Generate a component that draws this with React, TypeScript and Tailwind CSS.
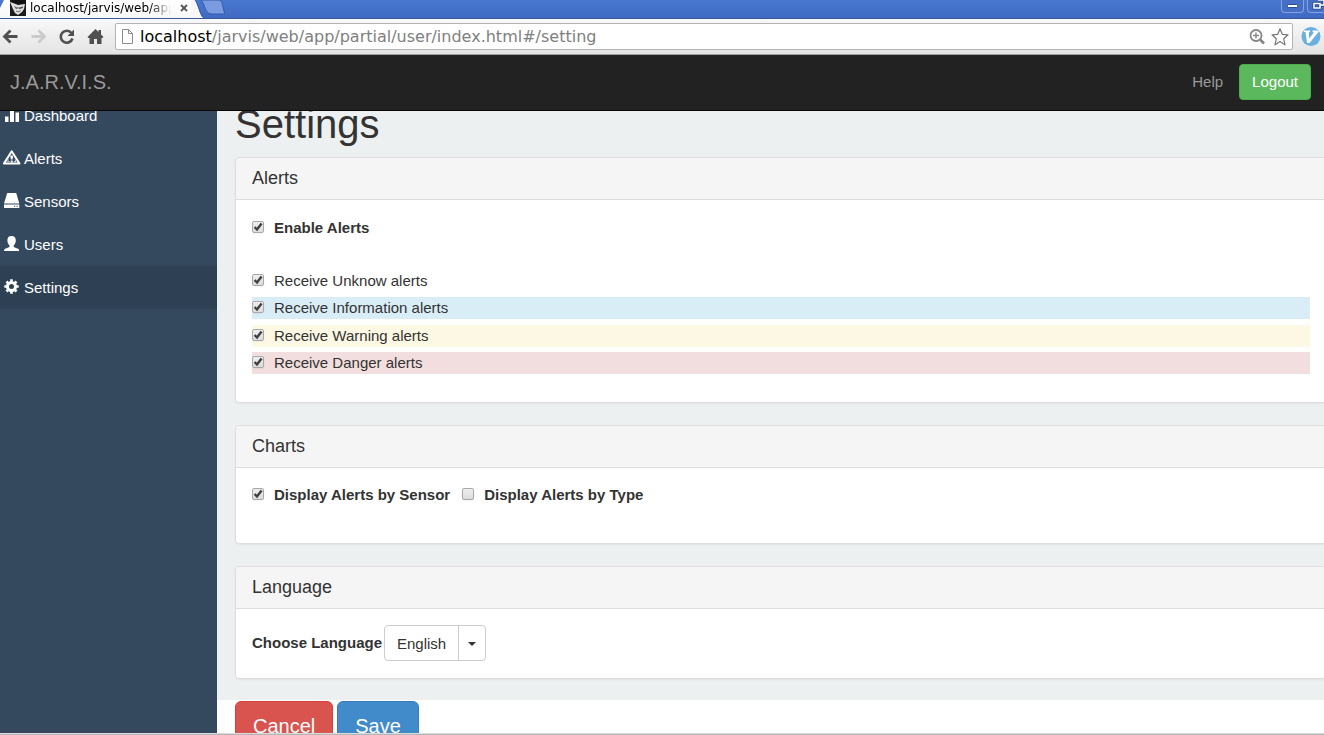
import { useState, type ReactNode } from "react";

function TabShape() {
  return (
    <svg className="h-[19px] w-7 shrink-0" viewBox="0 0 28 19" aria-hidden="true">
      <path d="M0 0H4C7 3 9 16 13 18.5V19H0Z" fill="#f7f7f7" />
      <path d="M4 0C7 3 9 16 13 18.5H28" fill="none" stroke="#2f56a0" strokeWidth="1" />
    </svg>
  );
}

function BrowserTabs() {
  return (
    <div className="flex h-[19px] items-start overflow-hidden border-b border-[#38589c] bg-linear-to-b from-[#4878cf] to-[#3f6ac4]">
      <div className="relative flex h-[19px] w-[191px] shrink-0 items-start bg-linear-to-b from-white to-[#f7f7f7] pl-[10px]">
        <svg className="absolute top-0 left-0 h-2 w-2" viewBox="0 0 8 8" aria-hidden="true">
          <path d="M0 0H4L0 8Z" fill="#4878cf" />
        </svg>
        <svg className="h-4 w-4 shrink-0" viewBox="0 0 16 16" aria-hidden="true">
          <path d="M0 0H16V16H0Z" fill="#1c1c1c" />
          <path d="M0 2L3 3L8 5L15 4L14 9L12 12L8 15L5 13L3 9Z" fill="#dedede" />
          <path d="M1 0H16V3L9 4L3 2.500Z" fill="#111" />
          <path d="M4 6L7 7.500L9 7.500L13 6.500V8L10 9L8 8.300L6 9Z" fill="#555" />
          <path d="M6 11L8 11.800L11 10.800" stroke="#777" fill="none" />
        </svg>
        <span className="ml-1 w-[141px] overflow-hidden mask-r-from-85% whitespace-nowrap text-xs leading-4 text-black">
          localhost/jarvis/web/app
        </span>
        <button type="button" aria-label="Close tab" className="ml-[9px] flex h-4 w-2 items-center">
          <svg className="h-2 w-2" viewBox="0 0 8 8" aria-hidden="true">
            <path d="M1 1L7 7M7 1L1 7" stroke="#555" strokeWidth="1.8" />
          </svg>
        </button>
      </div>
      <TabShape />
      <button type="button" aria-label="New tab" className="-ml-[18px] h-[19px] w-6">
        <svg className="h-[19px] w-6" viewBox="0 0 24 19" aria-hidden="true">
          <path d="M0 0H19C22 2 22 10 24 14H10C4 14 4 4 0 0Z" fill="#7a9be0" stroke="#3559a8" />
        </svg>
      </button>
      <div className="-mr-[6px] ml-auto flex gap-[3px]">
        <button type="button" aria-label="Minimize" className="h-[13px] w-[23px] rounded-b-sm border border-t-0 border-[#86a3dc] bg-[#456fc4]">
          <svg className="h-3 w-[21px]" viewBox="0 0 21 12" aria-hidden="true">
            <rect x="5.500" y="4.500" width="10" height="3" rx="1" fill="#fff" stroke="#27488c" />
          </svg>
        </button>
        <button type="button" aria-label="Restore" className="h-[13px] w-[23px] rounded-b-sm border border-t-0 border-[#86a3dc] bg-[#456fc4]">
          <svg className="h-3 w-[21px]" viewBox="0 0 21 12" aria-hidden="true">
            <path d="M10 0H16V5H12M6 3.500H12V8H6Z" fill="none" stroke="#27488c" strokeWidth="3" />
            <path d="M10 0H16V5H12M6 3.500H12V8H6Z" fill="none" stroke="#fff" strokeWidth="1.500" />
          </svg>
        </button>
      </div>
    </div>
  );
}

function ToolButton({ label, children }: { label: string; children: ReactNode }) {
  return (
    <button type="button" aria-label={label} className="flex h-6 w-[28px] shrink-0 items-center">
      <svg className="h-[18px] w-[18px]" viewBox="0 0 18 18" aria-hidden="true">
        {children}
      </svg>
    </button>
  );
}

function BrowserToolbar() {
  return (
    <div className="flex h-9 items-center border-b border-[#9f9f9f] bg-linear-to-b from-[#f8f8f8] to-[#e4e4e4] pr-[3px] pl-[2px]">
      <ToolButton label="Back">
        <path d="M15.500 8.500H3M8.500 2.500L2.500 8.500L8.500 14.500" fill="none" stroke="#505050" strokeWidth="2.800" />
      </ToolButton>
      <ToolButton label="Forward">
        <path d="M1.500 8.500H14M8.500 2.500L14.500 8.500L8.500 14.500" fill="none" stroke="#cbcbcb" strokeWidth="2.800" />
      </ToolButton>
      <ToolButton label="Reload">
        <path d="M13.500 5A6 6 0 1 0 14.500 10.500" fill="none" stroke="#505050" strokeWidth="2.600" />
        <path d="M16 1.500V8H9.500Z" fill="#505050" />
      </ToolButton>
      <ToolButton label="Home">
        <path d="M1.500 9L9.500 1L12.500 4V2H15V6.500L17.500 9L16.500 10H15.500V16H11V11H8V16H3.500V10H2.500Z" fill="#505050" />
      </ToolButton>
      <div className="mr-2 ml-px flex h-[27px] min-w-0 flex-1 items-center rounded-xs border border-[#b3b3b3] bg-white pr-[3px] pl-[6px]">
        <svg className="h-[15px] w-[11px] shrink-0" viewBox="0 0 11 15" aria-hidden="true">
          <path d="M.5 .5H6.500L10.500 4.500V14.500H.5ZM6.500 .5V4.500H10.500" fill="#fff" stroke="#8c8c8c" />
        </svg>
        <span className="ml-[7px] flex-1 truncate text-base leading-6 text-[#808080]">
          <span className="text-black">localhost</span>/jarvis/web/app/partial/user/index.html#/setting
        </span>
        <button type="button" aria-label="Zoom" className="mr-[6px]">
          <svg className="h-4 w-4" viewBox="0 0 16 16" fill="none" stroke="#868686" aria-hidden="true">
            <circle cx="7" cy="6.500" r="5.500" strokeWidth="1.800" />
            <path d="M4 6.500H10M7 3.500V9.500" strokeWidth="1.400" />
            <path d="M11 10.500L15 14.500" strokeWidth="2.600" />
          </svg>
        </button>
        <button type="button" aria-label="Bookmark">
          <svg className="h-[18px] w-[18px]" viewBox="0 0 18 18" aria-hidden="true">
            <path d="M9 .8L11.300 6.300L17 6.800L12.700 10.800L14 16.800L9 13.600L4 16.800L5.300 10.800L1 6.800L6.700 6.300Z" fill="#fff" stroke="#777" strokeWidth="1.200" strokeLinejoin="round" />
          </svg>
        </button>
      </div>
      <button type="button" aria-label="Extension">
        <svg className="h-5 w-5" viewBox="0 0 20 20" aria-hidden="true">
          <circle cx="10" cy="9.500" r="9.500" fill="#69b0e0" />
          <path d="M3 3.500H9V5H8V11.500L13 5.500L11.500 5V3.500H17.500V5L8.500 16H6L4.500 5H3Z" fill="#fff" />
        </svg>
      </button>
    </div>
  );
}

const navItems: { label: string; icon: ReactNode; active?: boolean }[] = [
  {
    label: "Dashboard",
    icon: <path d="M1 9.500H4.500V15H1ZM6 3H10V15H6ZM11.500 5.500H15V15H11.500Z" fill="#fff" />,
  },
  {
    label: "Alerts",
    icon: (
      <>
        <path d="M7.700 1.300L15.500 13.600H-.1Z" fill="none" stroke="#fff" strokeWidth="2" strokeLinejoin="round" />
        <path d="M6.200 5.500H9.200L8.500 9.500H6.900ZM6.800 10.500H8.700V12.500H6.800Z" fill="#fff" />
        <path d="M4.500 9.500L3.500 11.500H5.700M11 9.500L12 11.500H9.800" fill="none" stroke="#fff" strokeWidth=".7" />
      </>
    ),
  },
  {
    label: "Sensors",
    icon: (
      <>
        <path d="M3.200 0H12.200L15.300 10.500H0Z" fill="#fff" />
        <path d="M0 11.500H15.300V15H0Z" fill="#fff" />
        <path d="M10 13.300H11.200M12.500 13.300H13.700" stroke="#34495e" />
      </>
    ),
  },
  {
    label: "Users",
    icon: (
      <path d="M7.500 0C10.200 0 11.800 1.500 11.800 4.200C11.800 6.500 11 8.300 9.700 9.500V11L14 12.700Q15.200 13.200 15.200 15H0Q0 13.200 1.200 12.700L5.500 11V9.500C4.200 8.300 3.400 6.500 3.400 4.200C3.400 1.500 4.800 0 7.500 0Z" fill="#fff" />
    ),
  },
  {
    label: "Settings",
    active: true,
    icon: (
      <>
        <circle cx="7.500" cy="7.500" r="4" fill="none" stroke="#fff" strokeWidth="3" />
        <path d="M7.500 .3V3M7.500 12V14.700M.3 7.500H3M12 7.500H14.700M2.500 2.500L4.300 4.300M10.700 10.700L12.500 12.500M12.500 2.500L10.700 4.300M4.300 10.700L2.500 12.500" stroke="#fff" strokeWidth="2.600" />
      </>
    ),
  },
];

function Sidebar() {
  return (
    <nav className="w-[217px] shrink-0 overflow-hidden bg-[#34495e]">
      <ul className="-mt-[17px]">
        {navItems.map((item) => (
          <li key={item.label}>
            <a
              href={"#/" + item.label.toLowerCase()}
              className={
                item.active
                  ? "flex h-[43px] items-center gap-1 bg-[#2e4154] pl-1 text-white"
                  : "flex h-[43px] items-center gap-1 pl-1 text-white"
              }
            >
              <svg className="-mt-0.5 h-4 w-4 shrink-0 overflow-visible" viewBox="0 0 16 16" aria-hidden="true">
                {item.icon}
              </svg>
              {item.label}
            </a>
          </li>
        ))}
      </ul>
    </nav>
  );
}

function CheckRow({ label, initial = true, className }: { label: string; initial?: boolean; className: string }) {
  const [checked, setChecked] = useState(initial);
  return (
    <label className={"flex h-[22px] items-center " + className}>
      <span className="relative mr-[10px] -mt-0.5 h-3 w-3 shrink-0">
        <input
          type="checkbox"
          checked={checked}
          onChange={(event) => setChecked(event.target.checked)}
          className="block h-3 w-3 appearance-none rounded-xs border border-[#a8a8a8] bg-linear-to-b from-[#eeeeee] to-[#dcdcdc] shadow-xs"
        />
        {checked && (
          <svg className="pointer-events-none absolute top-0 left-0 h-3 w-3" viewBox="0 0 12 12" aria-hidden="true">
            <path d="M2.600 6L5 8.500L9.600 2.500" fill="none" stroke="#404040" strokeWidth="2.400" />
          </svg>
        )}
      </span>
      {label}
    </label>
  );
}

function Panel({ title, children, className }: { title: string; children: ReactNode; className: string }) {
  return (
    <section className="mb-[22px] rounded-sm border border-[#dddddd] bg-white shadow-xs last:mb-[21px]">
      <h2 className="rounded-t-sm border-b border-[#dddddd] bg-[#f5f5f5] px-4 py-[10px] text-lg leading-[21px]">
        {title}
      </h2>
      <div className={"px-4 " + className}>{children}</div>
    </section>
  );
}

export default function App() {
  return (
    <div className="flex h-screen flex-col overflow-hidden bg-white font-['Liberation_Sans',Arial,sans-serif] text-[15px] leading-[22px] text-[#333333]">
      <div className="shrink-0 font-['DejaVu_Sans',sans-serif]">
        <BrowserTabs />
        <BrowserToolbar />
      </div>
      <header className="flex h-14 shrink-0 items-center border-b border-[#080808] bg-[#222222] pr-[13px] pb-px pl-[10px] text-[#999999]">
        <a href="#/" className="mr-auto text-xl">J.A.R.V.I.S.</a>
        <a href="#/help" className="mr-4">Help</a>
        <button type="button" className="h-9 rounded-sm border border-[#4cae4c] bg-[#5cb85c] px-3 text-white">
          Logout
        </button>
      </header>
      <div className="flex min-h-0 flex-1">
        <Sidebar />
        <main className="min-w-0 flex-1 overflow-hidden">
          <div className="-mt-[9px] -mr-[3px] flow-root bg-[#ecf0f1] pl-[18px]">
            <h1 className="mb-[11px] text-[40px] leading-[44px]">Settings</h1>
            <Panel title="Alerts" className="pt-[17px] pb-7">
              <CheckRow label="Enable Alerts" className="w-fit font-bold" />
              <div className="mt-[31px] flex h-[104px] flex-col justify-between">
                <CheckRow label="Receive Unknow alerts" className="bg-white" />
                <CheckRow label="Receive Information alerts" className="bg-[#d9edf7]" />
                <CheckRow label="Receive Warning alerts" className="bg-[#fcf8e3]" />
                <CheckRow label="Receive Danger alerts" className="bg-[#f2dede]" />
              </div>
            </Panel>
            <Panel title="Charts" className="flex gap-3 pt-4 pb-[37px]">
              <CheckRow label="Display Alerts by Sensor" className="font-bold" />
              <CheckRow label="Display Alerts by Type" initial={false} className="font-bold" />
            </Panel>
            <Panel title="Language" className="flex items-center gap-0.5 pt-4 pb-[17px]">
              <span id="language-label" className="font-bold">Choose Language</span>
              <div role="group" aria-labelledby="language-label" className="flex h-9 rounded-sm border border-[#cccccc]">
                <button type="button" className="border-r border-[#cccccc] px-3 pt-px">English</button>
                <button type="button" aria-label="Show languages" className="flex w-[26px] items-center justify-center pt-0.5">
                  <svg className="h-1 w-2" viewBox="0 0 8 4" aria-hidden="true">
                    <path d="M0 0H8L4 4Z" fill="#333" />
                  </svg>
                </button>
              </div>
            </Panel>
          </div>
          <div className="flex gap-1 pt-px pl-[18px] text-xl text-white">
            <button type="button" className="h-[50px] rounded-md border border-[#d43f3a] bg-[#d9534f] px-[17px]">Cancel</button>
            <button type="button" className="h-[50px] rounded-md border border-[#357ebd] bg-[#428bca] px-[17px]">Save</button>
          </div>
        </main>
      </div>
      <div className="h-0.5 shrink-0 border-t border-[#dcdcdc] bg-[#b4b4b4]" />
    </div>
  );
}
